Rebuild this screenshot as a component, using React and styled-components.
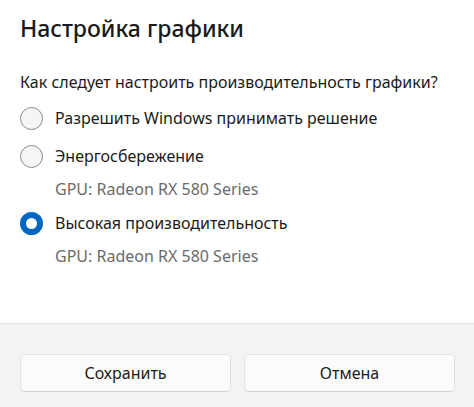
import React from "react";
import styled, { createGlobalStyle } from "styled-components";

const Global = createGlobalStyle`
  html, body { margin: 0; padding: 0; background: #ffffff; }
  body { font-family: "Noto Sans", "Open Sans", sans-serif; color: #1b1b1b; }
`;

const Dialog = styled.div`
  width: 474px;
  height: 407px;
  display: flex;
  flex-direction: column;
  background: #ffffff;
  overflow: hidden;
`;

const Body = styled.div`
  flex: 1;
  padding: 12px 20px 0 20px;
  display: flex;
  flex-direction: column;
`;

const Title = styled.h1`
  margin: 0;
  font-size: 23px;
  font-weight: 500;
  line-height: 32px;
  color: #1a1a1a;
`;

const Question = styled.p`
  margin: 26px 0 0 0;
  font-size: 16px;
  line-height: 24px;
  color: #1b1b1b;
`;

const Options = styled.div`
  display: flex;
  flex-direction: column;
  margin-top: 12px;
`;

const Option = styled.label`
  display: flex;
  flex-direction: column;
  margin-bottom: ${(p) => (p.$sub ? "10px" : "14px")};
`;

const OptionRow = styled.div`
  display: flex;
  align-items: center;
  gap: 12px;
  height: 24px;
`;

const Radio = styled.span`
  width: 23px;
  height: 23px;
  box-sizing: border-box;
  border-radius: 50%;
  flex: none;
  ${(p) =>
    p.$checked
      ? `border: 6px solid #0067c0; background: #ffffff;`
      : `border: 1px solid #8a8a8a; background: #f5f5f5;`}
`;

const OptionLabel = styled.span`
  font-size: 16px;
  color: #1b1b1b;
`;

const Sub = styled.span`
  margin: 9px 0 0 35px;
  font-size: 16px;
  line-height: 24px;
  color: #6b6b6b;
`;

const Footer = styled.div`
  height: 84px;
  box-sizing: border-box;
  background: #f3f3f3;
  border-top: 1px solid #e3e3e3;
  padding: 30px 19px 0 20px;
  display: grid;
  grid-template-columns: 1fr 1fr;
  gap: 13px;
  align-items: start;
`;

const Button = styled.button`
  height: 38px;
  border: 1px solid #e2e2e2;
  border-bottom-color: #cfcfcf;
  border-radius: 5px;
  background: #fbfbfb;
  font-family: inherit;
  font-size: 16px;
  color: #1b1b1b;
`;

const options = [
  { label: "Разрешить Windows принимать решение" },
  { label: "Энергосбережение", sub: "GPU: Radeon RX 580 Series" },
  { label: "Высокая производительность", sub: "GPU: Radeon RX 580 Series", checked: true },
];

export default function App() {
  return (
    <>
      <Global />
      <Dialog>
        <Body>
          <Title>Настройка графики</Title>
          <Question>Как следует настроить производительность графики?</Question>
          <Options>
            {options.map((o) => (
              <Option key={o.label} $sub={!!o.sub}>
                <OptionRow>
                  <Radio $checked={o.checked} />
                  <OptionLabel>{o.label}</OptionLabel>
                </OptionRow>
                {o.sub && <Sub>{o.sub}</Sub>}
              </Option>
            ))}
          </Options>
        </Body>
        <Footer>
          <Button>Сохранить</Button>
          <Button>Отмена</Button>
        </Footer>
      </Dialog>
    </>
  );
}
